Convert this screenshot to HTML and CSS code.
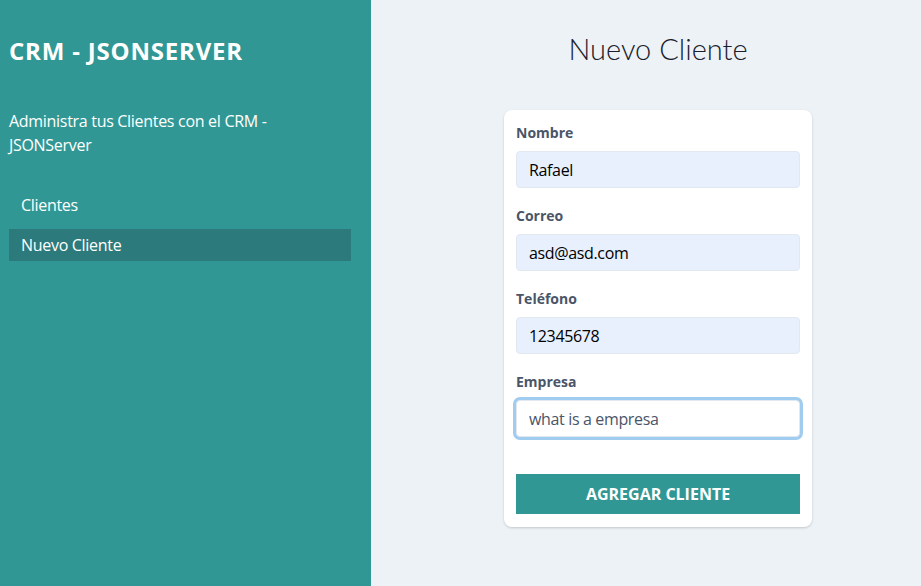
FILE: index.html
```html
<!DOCTYPE html>
<html lang="es">
<head>
<meta charset="utf-8">
<title>CRM - JSONSERVER</title>
<link rel="stylesheet" href="styles.css">
</head>
<body>
<div class="app">
  <aside class="sidebar">
    <h2 class="brand">CRM - JSONSERVER</h2>
    <p class="tagline">Administra tus Clientes con el CRM - JSONServer</p>
    <nav class="nav">
      <a class="nav-link" href="#">Clientes</a>
      <a class="nav-link active" href="#">Nuevo Cliente</a>
    </nav>
  </aside>
  <main class="main">
    <h1 class="page-title">Nuevo Cliente</h1>
    <form class="card">
      <div class="field">
        <label class="label" for="nombre">Nombre</label>
        <input class="input autofill" id="nombre" type="text" value="Rafael">
      </div>
      <div class="field">
        <label class="label" for="correo">Correo</label>
        <input class="input autofill" id="correo" type="text" value="asd@asd.com">
      </div>
      <div class="field">
        <label class="label" for="telefono">Teléfono</label>
        <input class="input autofill" id="telefono" type="text" value="12345678">
      </div>
      <div class="field">
        <label class="label" for="empresa">Empresa</label>
        <input class="input focused" id="empresa" type="text" value="what is a empresa">
      </div>
      <button class="btn" type="button">Agregar Cliente</button>
    </form>
  </main>
</div>
</body>
</html>
```
FILE: styles.css
```css
* { box-sizing: border-box; }
html, body { margin: 0; padding: 0; }
body {
  font-family: "Open Sans", "Noto Sans", sans-serif;
  background: #edf2f7;
  color: #1a202c;
}
.app {
  display: flex;
  min-height: 586px;
}
.sidebar {
  width: 371px;
  flex: none;
  background: #319795;
  color: #ffffff;
  padding: 35px 20px 0 9px;
}
.brand {
  margin: 0;
  font-size: 24px;
  line-height: 32px;
  font-weight: 700;
  letter-spacing: 0.8px;
}
.tagline {
  margin: 42px 0 0;
  font-size: 16px;
  line-height: 24px;
  letter-spacing: -0.3px;
}
.nav {
  margin-top: 32px;
  display: flex;
  flex-direction: column;
  gap: 8px;
}
.nav-link {
  display: block;
  color: #ffffff;
  text-decoration: none;
  font-size: 16px;
  line-height: 24px;
  padding: 4px 12px;
  letter-spacing: -0.3px;
}
.nav-link.active { background: #2c7a7b; }
.main {
  flex: 1;
  padding: 31px 0 0 24px;
  display: flex;
  flex-direction: column;
  align-items: center;
}
.page-title {
  margin: 0;
  font-family: "Lato", "Open Sans", sans-serif;
  font-size: 29px;
  line-height: 36px;
  font-weight: 300;
  color: #1a202c;
}
.card {
  margin-top: 43px;
  width: 308px;
  background: #ffffff;
  border-radius: 8px;
  box-shadow: 0 1px 3px rgba(0,0,0,0.12), 0 1px 2px rgba(0,0,0,0.06);
  padding: 13px 12px;
  display: flex;
  flex-direction: column;
  gap: 18px;
}
.field { display: flex; flex-direction: column; }
.label {
  font-size: 14px;
  line-height: 20px;
  font-weight: 700;
  color: #4a5568;
  margin-bottom: 8px;
}
.input {
  height: 37px;
  width: 100%;
  border: 1px solid #e2e8f0;
  border-radius: 4px;
  padding: 0 12px;
  font-family: inherit;
  font-size: 16px;
  letter-spacing: -0.35px;
  outline: none;
}
.input.autofill {
  background: #e8f0fe;
  color: #000000;
}
.input.focused {
  background: #ffffff;
  color: #4a5568;
  box-shadow: 0 0 0 3px rgba(66,153,225,0.5);
}
.btn {
  margin-top: 19px;
  height: 40px;
  border: 0;
  background: #319795;
  color: #ffffff;
  font-family: inherit;
  font-weight: 700;
  font-size: 16px;
  text-transform: uppercase;
  cursor: pointer;
}
```
